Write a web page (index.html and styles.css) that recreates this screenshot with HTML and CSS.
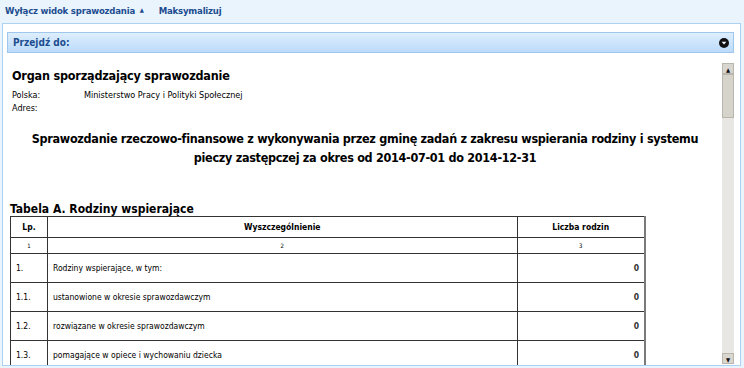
FILE: index.html
```html
<!DOCTYPE html>
<html lang="pl">
<head>
    <meta charset="UTF-8">
    <title>Sprawozdanie</title>
    <link rel="stylesheet" href="styles.css">
</head>
<body>
    <div class="toolbar">
        <a class="tool-link" href="#">Wyłącz widok sprawozdania <span class="arrow">&#9650;</span></a>
        <a class="tool-link" href="#">Maksymalizuj</a>
    </div>

    <div class="panel">
        <div class="goto-bar">
            <span>Przejdź do:</span>
            <span class="goto-icon">
                <svg width="10" height="10" viewBox="0 0 10 10">
                    <circle cx="5" cy="5" r="5" fill="#111"/>
                    <path d="M2.6 3.8 H7.4 L5 6.6 Z" fill="#fff"/>
                </svg>
            </span>
        </div>

        <div class="report-area">
            <div class="report">
                <h1 class="organ-title">Organ sporządzający sprawozdanie</h1>
                <div class="info-row"><span class="info-label">Polska:</span><span>Ministerstwo Pracy i Polityki Społecznej</span></div>
                <div class="info-row"><span class="info-label">Adres:</span><span></span></div>

                <h2 class="report-title">Sprawozdanie rzeczowo-finansowe z wykonywania przez gminę zadań z zakresu wspierania rodziny i systemu<br>pieczy zastępczej za okres od 2014-07-01 do 2014-12-31</h2>

                <h3 class="table-title">Tabela A. Rodziny wspierające</h3>
                <table class="report-table">
                    <colgroup>
                        <col class="col-lp">
                        <col class="col-name">
                        <col class="col-value">
                    </colgroup>
                    <thead>
                        <tr class="head-row">
                            <th>Lp.</th>
                            <th>Wyszczególnienie</th>
                            <th>Liczba rodzin</th>
                        </tr>
                        <tr class="num-row">
                            <td>1</td>
                            <td>2</td>
                            <td>3</td>
                        </tr>
                    </thead>
                    <tbody>
                        <tr>
                            <td>1.</td>
                            <td>Rodziny wspierające, w tym:</td>
                            <td class="value">0</td>
                        </tr>
                        <tr>
                            <td>1.1.</td>
                            <td>ustanowione w okresie sprawozdawczym</td>
                            <td class="value">0</td>
                        </tr>
                        <tr>
                            <td>1.2.</td>
                            <td>rozwiązane w okresie sprawozdawczym</td>
                            <td class="value">0</td>
                        </tr>
                        <tr>
                            <td>1.3.</td>
                            <td>pomagające w opiece i wychowaniu dziecka</td>
                            <td class="value">0</td>
                        </tr>
                    </tbody>
                </table>
            </div>

            <div class="scrollbar">
                <div class="scroll-btn">&#9650;</div>
                <div class="scroll-thumb"></div>
                <div class="scroll-track"></div>
                <div class="scroll-btn">&#9660;</div>
            </div>
        </div>
    </div>
</body>
</html>
```

FILE: styles.css
```css
* {
    margin: 0;
    padding: 0;
    box-sizing: border-box;
}

body {
    width: 744px;
    height: 368px;
    overflow: hidden;
    background-color: #e9f4fd;
    font-family: "DejaVu Sans Condensed", "DejaVu Sans", sans-serif;
    color: #000;
}

.toolbar {
    height: 23px;
    display: flex;
    align-items: center;
    gap: 15px;
    padding: 0 0 3px 5px;
}

.tool-link {
    font-size: 9.5px;
    font-weight: bold;
    letter-spacing: -0.2px;
    color: #1d4d8f;
    text-decoration: none;
}

.tool-link .arrow {
    font-size: 6px;
    vertical-align: 2px;
    margin-left: 2px;
}

.panel {
    margin: 0 3px 0 2px;
    height: 343px;
    background-color: #fff;
    border: 1px solid #add1f1;
    padding: 8px 6px 0 4px;
    display: flex;
    flex-direction: column;
}

.goto-bar {
    height: 21px;
    display: flex;
    align-items: center;
    justify-content: space-between;
    padding: 0 4px 0 5px;
    background: linear-gradient(#deeefd, #bcdbfa);
    border: 1px solid #9fc7ee;
    font-size: 10px;
    font-weight: bold;
    color: #1d4d8f;
}

.goto-icon {
    display: flex;
}

.report-area {
    flex: 1;
    display: flex;
    margin-top: 8px;
    min-height: 0;
}

.report {
    flex: 1;
    overflow: hidden;
    padding: 5px 0 0 3px;
}

.organ-title {
    font-size: 12.5px;
    font-weight: bold;
    letter-spacing: -0.2px;
    line-height: 19px;
    margin-left: 2px;
    margin-bottom: 4px;
}

.info-row {
    display: flex;
    font-size: 9px;
    line-height: 13px;
    margin-left: 2px;
}

.info-label {
    width: 72px;
}

.report-title {
    margin-top: 14px;
    text-align: center;
    white-space: nowrap;
    font-size: 12.5px;
    font-weight: bold;
    letter-spacing: -0.3px;
    line-height: 19px;
    padding-right: 2px;
}

.table-title {
    margin-top: 35px;
    font-size: 12px;
    font-weight: bold;
    line-height: 14px;
}

.report-table {
    width: 636px;
    border-collapse: collapse;
    border: 1px solid #555;
    border-right: 2px solid #7a7a7a;
    font-size: 8.5px;
}

.col-lp {
    width: 37px;
}

.col-value {
    width: 128px;
}

.report-table th,
.report-table td {
    border: 1px solid #333;
    padding: 0 5px;
}

.head-row th {
    height: 21px;
    font-weight: bold;
    text-align: center;
}

.num-row td {
    height: 16px;
    font-size: 6px;
    text-align: center;
}

.report-table tbody td {
    height: 29px;
}

.report-table td.value {
    text-align: right;
    font-weight: bold;
    color: #333;
}

.scrollbar {
    width: 12px;
    margin: 2px 0 1px 0;
    display: flex;
    flex-direction: column;
    background-color: #e8e7e3;
}

.scroll-btn {
    height: 11px;
    font-size: 6px;
    line-height: 11px;
    text-align: center;
    background-color: #d8d6ce;
    border: 1px solid #b9b6ad;
    color: #111;
}

.scroll-thumb {
    height: 44px;
    background-color: #d6d3cb;
    border: 1px solid #b9b6ad;
}

.scroll-track {
    flex: 1;
}
```
